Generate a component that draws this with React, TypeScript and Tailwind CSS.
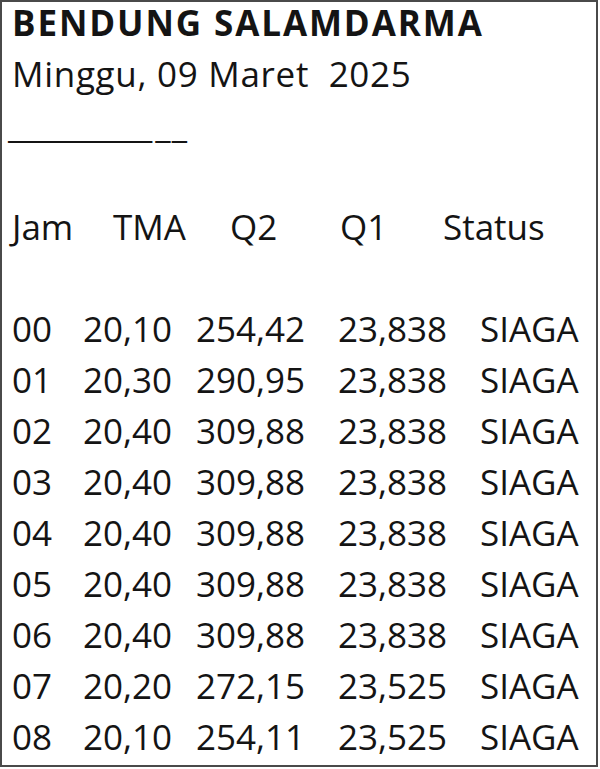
const rows = [
  ["00", "20,10", "254,42", "23,838", "SIAGA"],
  ["01", "20,30", "290,95", "23,838", "SIAGA"],
  ["02", "20,40", "309,88", "23,838", "SIAGA"],
  ["03", "20,40", "309,88", "23,838", "SIAGA"],
  ["04", "20,40", "309,88", "23,838", "SIAGA"],
  ["05", "20,40", "309,88", "23,838", "SIAGA"],
  ["06", "20,40", "309,88", "23,838", "SIAGA"],
  ["07", "20,20", "272,15", "23,525", "SIAGA"],
  ["08", "20,10", "254,11", "23,525", "SIAGA"],
];

export default function App() {
  return (
    <div className="w-[600px] h-[769px] bg-white">
      <div
        className="w-[598px] h-[767px] border-2 border-[#4a4a4a] overflow-hidden text-[#141414] text-[35px] leading-[51px] whitespace-pre"
        style={{ fontFamily: '"Open Sans", "Noto Sans", sans-serif' }}
      >
        <div className="-mt-[5px] pl-[10px]">
          <div className="font-bold tracking-[1.9px]">BENDUNG SALAMDARMA</div>
          <div className="tracking-[0.7px]">Minggu, 09 Maret  2025</div>
          <div className="-ml-[4px] flex">
            <span className="tracking-[-1px]">__________</span>
            <span className="ml-[4px] tracking-[1px]">__</span>
          </div>
          <div>&nbsp;</div>

          <div className="flex">
            <span className="w-[101px]">Jam</span>
            <span className="w-[117px]">TMA</span>
            <span className="w-[110px]">Q2</span>
            <span className="w-[103px]">Q1</span>
            <span>Status</span>
          </div>
          <div>&nbsp;</div>

          {rows.map((r) => (
            <div key={r[0]} className="flex">
              <span className="w-[71px]">{r[0]}</span>
              <span className="w-[113px]">{r[1]}</span>
              <span className="w-[142px]">{r[2]}</span>
              <span className="w-[142px]">{r[3]}</span>
              <span>{r[4]}</span>
            </div>
          ))}
        </div>
      </div>
    </div>
  );
}
